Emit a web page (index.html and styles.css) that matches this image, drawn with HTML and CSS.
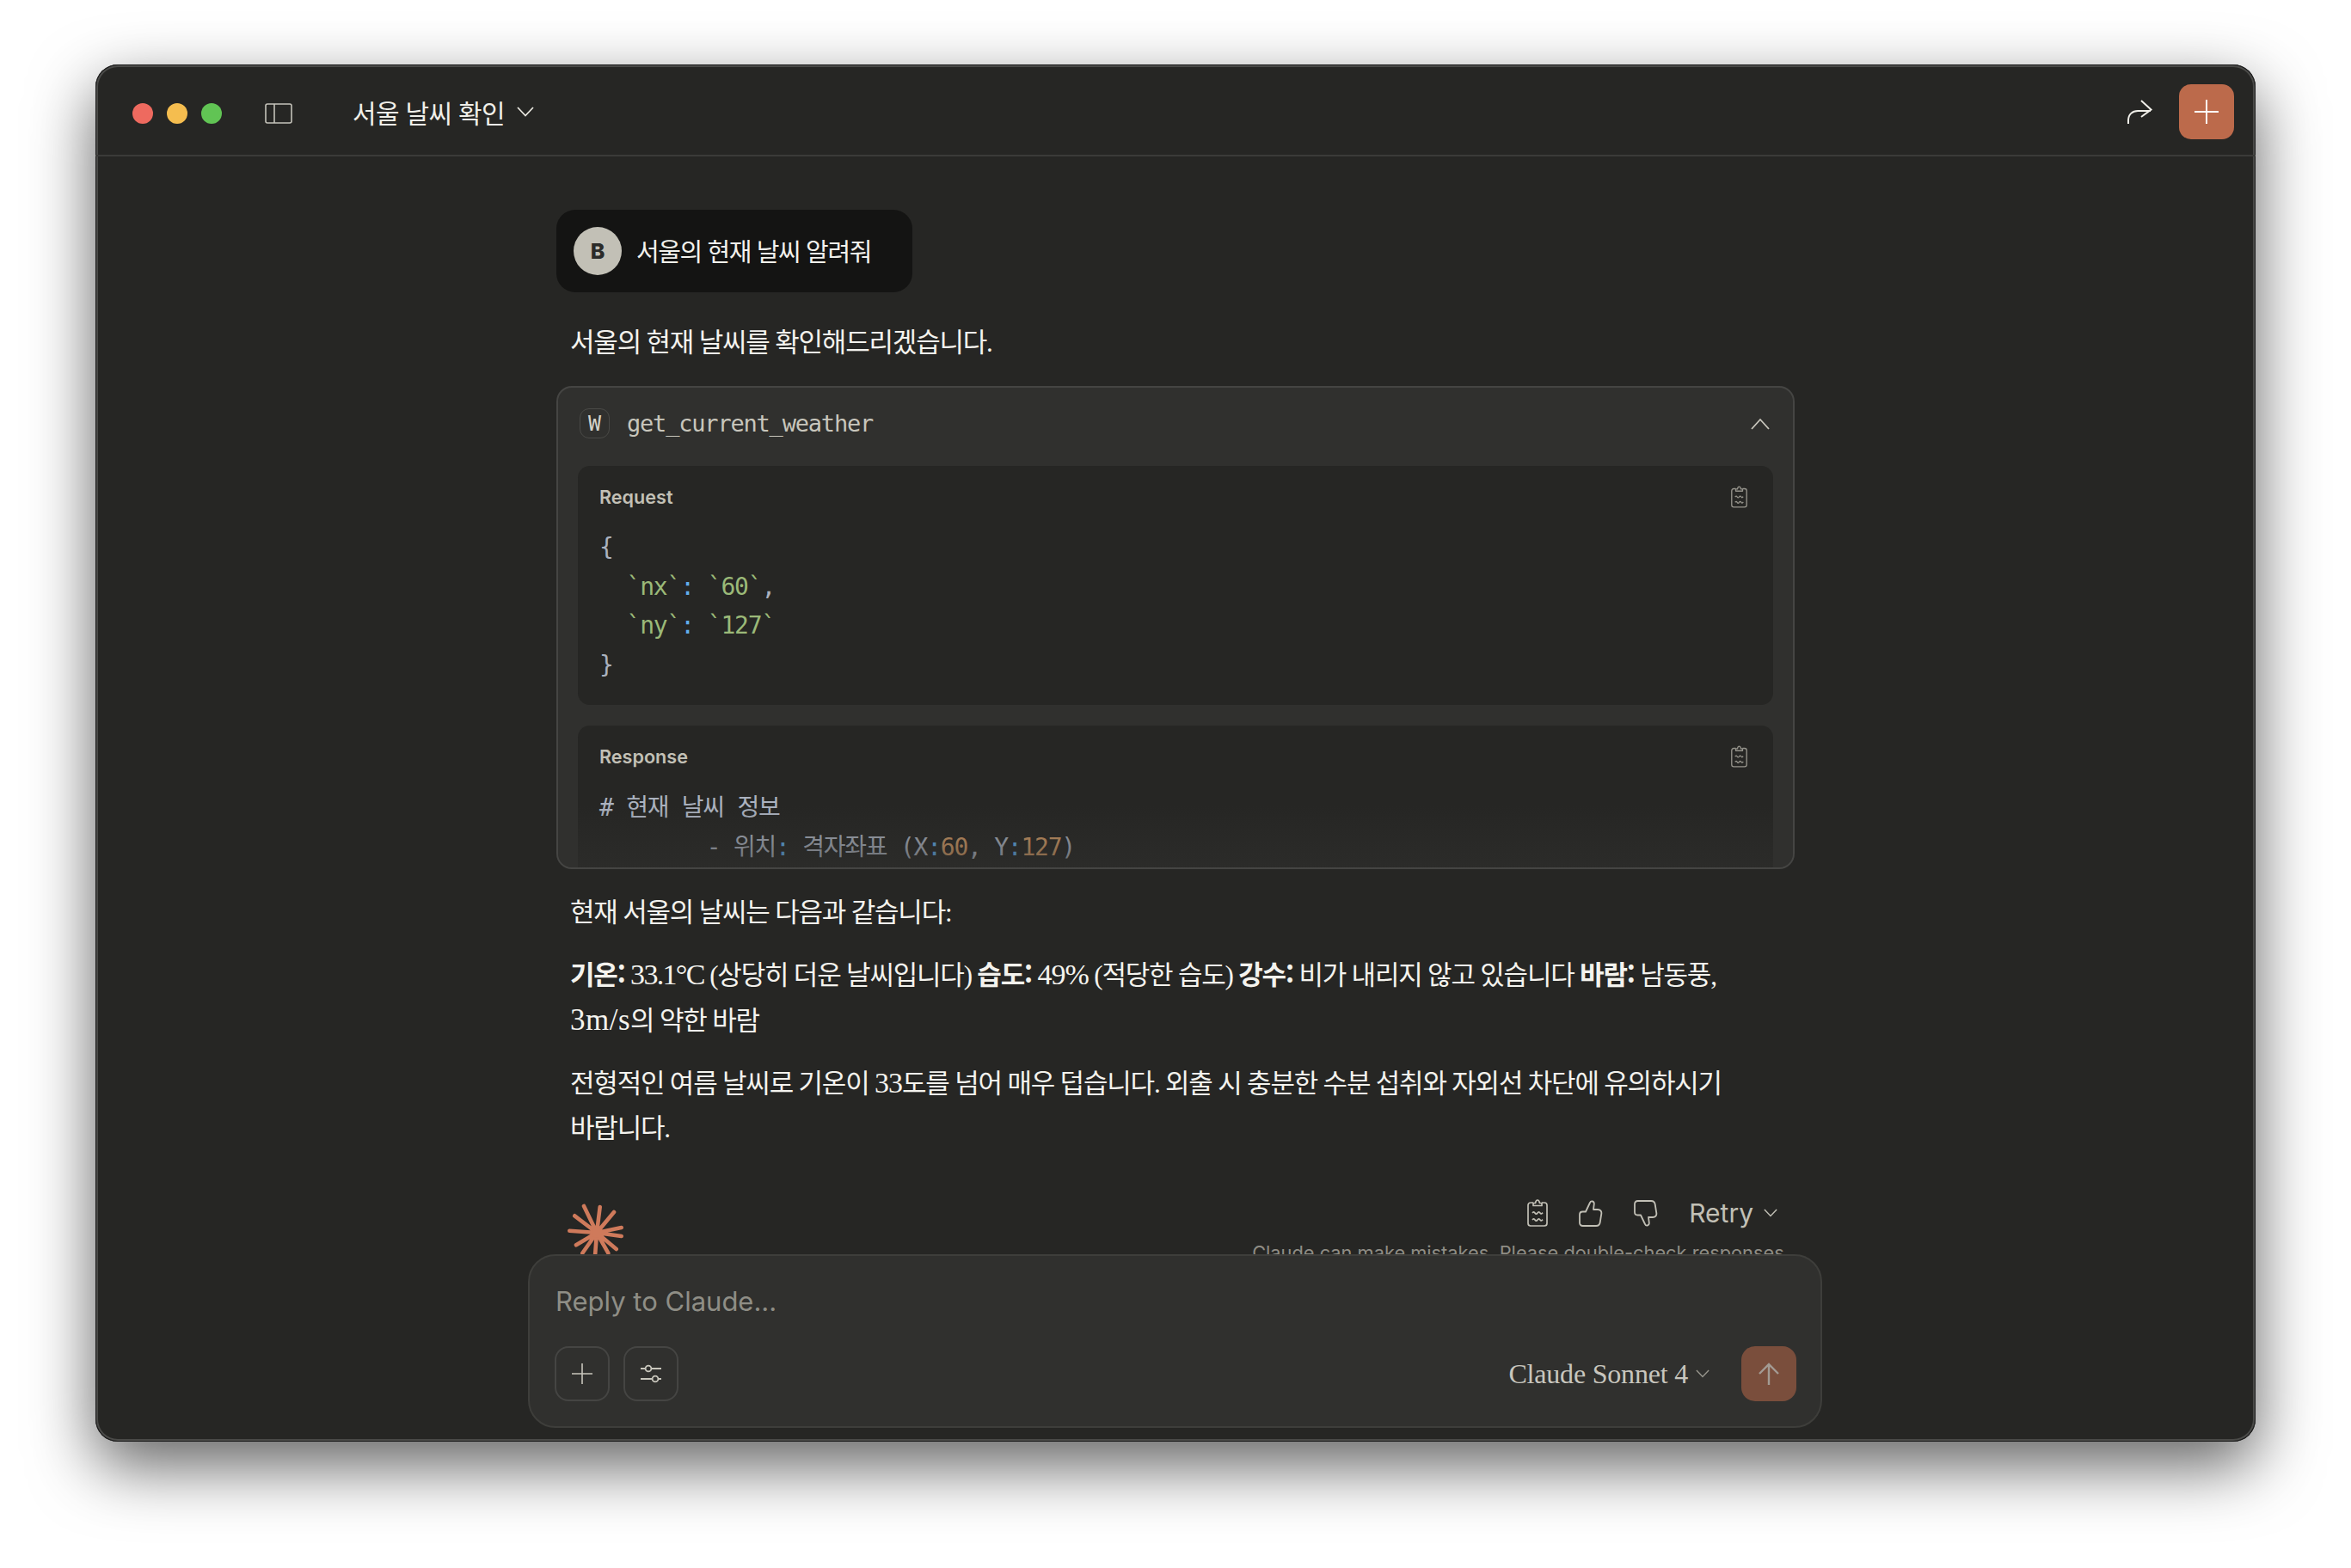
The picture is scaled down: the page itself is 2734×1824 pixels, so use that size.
FILE: index.html
```html
<!DOCTYPE html>
<html lang="ko">
<head>
    <meta charset="UTF-8">
    <title>서울 날씨 확인</title>
    <link rel="stylesheet" href="styles.css">
</head>
<body>
    <svg class="sprites" width="0" height="0">
        <symbol id="clip" viewBox="0 0 24 32">
            <path d="M7 4H4a3 3 0 0 0-3 3v21a3 3 0 0 0 3 3h16a3 3 0 0 0 3-3V7a3 3 0 0 0-3-3h-3" fill="none" stroke="currentColor" stroke-width="1.7"/>
            <path d="M7 7.5V4.5h2.5C10 2 11 1 12 1s2 1 2.500 3.500H17v3z" fill="none" stroke="currentColor" stroke-width="1.700" stroke-linejoin="round"/>
            <path d="M6 16c1.500-1.500 2-1.500 3 0s2 1.500 3 0 2-1.500 3 0 1.500 1 3-.3M6 24c1.500-1.500 2-1.500 3 0s2 1.500 3 0 2-1.500 3 0 1.500 1 3-.3" fill="none" stroke="currentColor" stroke-width="1.700"/>
        </symbol>
        <symbol id="thumb" viewBox="0 0 28 31">
            <path d="M8 13.500 13 3c1-2.500 5-2 4.800 1.500L17 11h5c3 0 4.800 2.200 4.300 5l-1.600 10c-.4 2.500-2 4-4.500 4H4.500C2.500 30 1 28.500 1 26.500v-9.500C1 15 2.500 13.500 4.500 13.500z" fill="none" stroke="currentColor" stroke-width="1.800" stroke-linejoin="round"/>
        </symbol>
    </svg>

    <div class="window">
        <!-- Title bar -->
        <div class="titlebar">
            <div class="lights">
                <span class="light red"></span>
                <span class="light yellow"></span>
                <span class="light green"></span>
            </div>
            <svg class="sidebar-icon" viewBox="0 0 32 24"><rect x="1" y="1" width="30" height="22" rx="2" fill="none" stroke="currentColor" stroke-width="1.600"/><path d="M11 1v22" stroke="currentColor" stroke-width="1.600"/></svg>
            <div class="chat-title">서울 날씨 확인</div>
            <svg class="title-chevron" viewBox="0 0 20 12"><path d="M1 1l9 9.500L19 1" fill="none" stroke="currentColor" stroke-width="1.800"/></svg>
            <svg class="share-icon" viewBox="0 0 30 30"><path d="M2 29v-4c0-7 5-11 11-11h15M17 2l11.500 10.500L17 21" fill="none" stroke="currentColor" stroke-width="2"/></svg>
            <button class="new-chat">
                <svg viewBox="0 0 28 28"><path d="M14 0v28M0 14h28" stroke="currentColor" stroke-width="2"/></svg>
            </button>
        </div>

        <div class="main">
            <div class="chat">
                <div class="user-msg">
                    <span class="avatar">B</span>
                    <span class="user-text">서울의 현재 날씨 알려줘</span>
                </div>
                <p class="answer first">서울의 현재 날씨를 확인해드리겠습니다.</p>

                <!-- Tool call -->
                <div class="tool">
                    <div class="tool-head">
                        <span class="tool-badge">W</span>
                        <span class="tool-name">get_current_weather</span>
                        <svg class="tool-chevron" viewBox="0 0 22 14"><path d="M1 13l10-11 10 11" fill="none" stroke="currentColor" stroke-width="1.800"/></svg>
                    </div>
                    <div class="panel">
                        <div class="panel-head">
                            <span>Request</span>
                            <svg class="panel-copy"><use href="#clip"/></svg>
                        </div>
<pre class="code"><span class="pun">{</span>
  <span class="str">`nx`</span><span class="key">:</span> <span class="str">`60`</span><span class="pun">,</span>
  <span class="str">`ny`</span><span class="key">:</span> <span class="str">`127`</span>
<span class="pun">}</span></pre>
                    </div>
                    <div class="panel second">
                        <div class="panel-head">
                            <span>Response</span>
                            <svg class="panel-copy"><use href="#clip"/></svg>
                        </div>
<pre class="code kr"><span class="pun"># 현재 날씨 정보
        - 위치</span><span class="key">:</span><span class="pun"> 격자좌표 (X</span><span class="key">:</span><span class="num">60</span><span class="pun">, Y</span><span class="key">:</span><span class="num">127</span><span class="pun">)</span></pre>
                    </div>
                    <div class="tool-fade"></div>
                </div>

                <p class="answer after-tool">현재 서울의 날씨는 다음과 같습니다:</p>
                <p class="answer tight"><b>기온:</b> <span class="lat temp">33.1°C</span> (상당히 더운 날씨입니다) <b>습도:</b> <span class="lat">49%</span> (적당한 습도) <b>강수:</b> 비가 내리지 않고 있습니다 <b>바람:</b> 남동풍,<br><span class="lat speed">3m/s</span>의 약한 바람</p>
                <p class="answer last">전형적인 여름 날씨로 기온이 <span class="lat">33</span>도를 넘어 매우 덥습니다. 외출 시 충분한 수분 섭취와 자외선 차단에 유의하시기<br>바랍니다.</p>

                <div class="actions">
                    <svg class="logo" viewBox="0 0 68 68">
                        <g stroke="#cf7a5b" stroke-width="4.600" stroke-linecap="round">
                            <path d="M34 35L19 4M34 35L37.700 5M34 35L54 11M34 35L62.700 29M34 35L62.700 39M34 35L56.700 54M34 35L47.300 58.700M34 35L31.700 66M34 35L17.300 58.700M34 35L10 49.300M34 35L2.300 32.700M34 35L8.300 15.300"/>
                        </g>
                        <circle cx="34" cy="35" r="6" fill="#cf7a5b"/>
                    </svg>
                    <div class="actions-right">
                        <div class="action-btns">
                            <svg class="act-copy"><use href="#clip"/></svg>
                            <svg class="act-thumb"><use href="#thumb"/></svg>
                            <svg class="act-thumb down"><use href="#thumb"/></svg>
                            <span class="retry">Retry</span>
                            <svg class="retry-chevron" viewBox="0 0 18 11"><path d="M1 1l8 8.500L17 1" fill="none" stroke="currentColor" stroke-width="1.600"/></svg>
                        </div>
                        <div class="disclaimer">Claude can make mistakes. Please double-check responses.</div>
                    </div>
                </div>
            </div>

            <!-- Reply box sits over the end of the chat -->
            <div class="composer">
                <div class="placeholder">Reply to Claude...</div>
                <div class="composer-row">
                    <button class="tool-btn">
                        <svg viewBox="0 0 24 24" width="24" height="24"><path d="M12 0v24M0 12h24" stroke="currentColor" stroke-width="1.600"/></svg>
                    </button>
                    <button class="tool-btn">
                        <svg viewBox="0 0 24 22" width="24" height="22"><path d="M0 5h5M13 5h11M0 17h13M20 17h4" stroke="currentColor" stroke-width="1.800"/><circle cx="9" cy="5" r="3.400" fill="none" stroke="currentColor" stroke-width="1.800"/><circle cx="17" cy="17" r="3.400" fill="none" stroke="currentColor" stroke-width="1.800"/></svg>
                    </button>
                    <span class="model">Claude Sonnet 4</span>
                    <svg class="model-chevron" viewBox="0 0 18 11"><path d="M1 1l8 8.500L17 1" fill="none" stroke="currentColor" stroke-width="1.600"/></svg>
                    <button class="send">
                        <svg viewBox="0 0 24 26" width="24" height="26"><path d="M12 26V2M1 13L12 2l11 11" fill="none" stroke="currentColor" stroke-width="2.400"/></svg>
                    </button>
                </div>
            </div>
        </div>
    </div>
</body>
</html>
```

FILE: styles.css
```css
html, body {
    margin: 0;
    padding: 0;
    background-color: #fff;
}
body {
    width: 2734px;
    height: 1824px;
    overflow: hidden;
    font-family: "Noto Sans CJK KR", sans-serif;
}
.sprites {
    position: absolute;
}
.window {
    width: 2512px;
    height: 1602px;
    margin: 75px 0 0 111px;
    box-sizing: border-box;
    display: flex;
    flex-direction: column;
    background-color: #262624;
    border-radius: 26px;
    box-shadow: inset 0 0 0 1px #1a1a1a, inset 0 0 0 3px #4a4a48, 0 28px 76px rgba(0, 0, 0, 0.62);
    overflow: hidden;
    color: #f2f1ec;
}

/* title bar */
.titlebar {
    height: 107px;
    flex: none;
    box-sizing: border-box;
    display: flex;
    align-items: center;
    padding: 6px 25px 1px 43px;
    border-bottom: 2px solid #3b3b39;
}
.lights {
    display: flex;
    gap: 16px;
    margin-top: 4px;
}
.light {
    width: 24px;
    height: 24px;
    border-radius: 50%;
}
.light.red { background-color: #ee6a5f; }
.light.yellow { background-color: #f5bd4f; }
.light.green { background-color: #61c454; }
.sidebar-icon {
    width: 32px;
    height: 24px;
    margin-left: 50px;
    margin-top: 4px;
    color: #c5c3ba;
}
.chat-title {
    margin-left: 70px;
    font-size: 30px;
    letter-spacing: -0.7px;
    line-height: 40px;
    color: #f0efe9;
}
.title-chevron {
    width: 20px;
    height: 12px;
    margin-left: 14px;
    color: #e6e4dd;
}
.share-icon {
    width: 30px;
    height: 30px;
    margin-left: auto;
    color: #f0efe9;
}
.new-chat {
    width: 64px;
    height: 64px;
    margin-left: 31px;
    padding: 0;
    border: none;
    border-radius: 14px;
    background-color: #bc6a4b;
    color: #fff;
    display: flex;
    align-items: center;
    justify-content: center;
}
.new-chat svg {
    width: 28px;
    height: 28px;
}

/* chat column */
.main {
    flex: 1;
    position: relative;
    overflow: hidden;
}
.chat {
    width: 1440px;
    margin: 0 auto;
    padding-top: 62px;
}
.user-msg {
    width: 414px;
    height: 96px;
    box-sizing: border-box;
    display: flex;
    align-items: center;
    gap: 17px;
    padding-left: 20px;
    background-color: #141413;
    border-radius: 22px;
    font-size: 29px;
    letter-spacing: -1.4px;
}
.user-text {
    margin-top: -3px;
}
.avatar {
    width: 56px;
    height: 56px;
    flex: none;
    border-radius: 50%;
    background-color: #c2c0b6;
    color: #2b2b29;
    display: flex;
    align-items: center;
    justify-content: center;
    font-family: Inter, sans-serif;
    font-size: 25px;
    font-weight: 800;
    letter-spacing: 0;
}
.answer {
    margin: 22px 0 0 16px;
    font-family: "Liberation Serif", "Noto Sans CJK KR", serif;
    font-size: 31px;
    line-height: 52px;
    letter-spacing: -1.2px;
    white-space: nowrap;
    color: #f4f3ee;
}
.answer.first {
    margin-top: 33px;
}
.answer.after-tool {
    margin-top: 25px;
}
.answer.tight {
    margin-top: 18px;
}
.answer.last {
    margin-top: 20px;
}
.answer b {
    font-family: "Noto Sans CJK KR", sans-serif;
    font-weight: 700;
}
.lat {
    font-size: 34px;
    letter-spacing: -1px;
}
.lat.temp {
    letter-spacing: -1.700px;
}
.lat.speed {
    font-size: 35px;
    letter-spacing: 0.5px;
}

/* tool card */
.tool {
    position: relative;
    height: 562px;
    margin-top: 24px;
    box-sizing: border-box;
    padding: 0 23px;
    background-color: #30302e;
    border: 2px solid #454543;
    border-radius: 18px;
    overflow: hidden;
}
.tool-head {
    height: 91px;
    box-sizing: border-box;
    padding: 0 2px 8px;
    display: flex;
    align-items: center;
}
.tool-badge {
    width: 35px;
    height: 35px;
    box-sizing: border-box;
    border: 1px solid #4a4a47;
    border-radius: 11px;
    display: flex;
    align-items: center;
    justify-content: center;
    font-family: "DejaVu Sans Mono", monospace;
    font-size: 25px;
    letter-spacing: 0;
    color: #d5d3ca;
}
.tool-name {
    margin-left: 20px;
    font-family: "DejaVu Sans Mono", monospace;
    font-size: 27px;
    letter-spacing: -1.200px;
    color: #c8c6bc;
}
.tool-chevron {
    width: 22px;
    height: 14px;
    margin-left: auto;
    margin-right: 2px;
    color: #c8c6bc;
}
.panel {
    height: 278px;
    box-sizing: border-box;
    padding: 0 30px 0 25px;
    background-color: #262624;
    border-radius: 14px;
}
.panel.second {
    margin-top: 24px;
}
.panel-head {
    height: 72px;
    display: flex;
    align-items: center;
    justify-content: space-between;
    font-family: Inter, sans-serif;
    font-size: 21.600px;
    font-weight: 600;
    color: #c2c0b6;
}
.panel-copy {
    width: 19px;
    height: 26px;
    color: #96948c;
}
.code {
    margin: 0;
    font-family: "DejaVu Sans Mono", "Noto Sans CJK KR", monospace;
    font-size: 28px;
    line-height: 45.500px;
    letter-spacing: -1.150px;
    color: #abb2bf;
}
.code.kr {
    padding-top: 1px;
    letter-spacing: -1.250px;
}
.pun { color: #abb2bf; }
.str { color: #9bb978; }
.key { color: #61afef; }
.num { color: #d19a66; }
.tool-fade {
    position: absolute;
    left: 0;
    right: 0;
    bottom: 0;
    height: 72px;
    background: linear-gradient(to bottom, rgba(48, 48, 46, 0), rgba(48, 48, 46, 0.55));
}

/* actions under the answer */
.actions {
    margin-top: 60px;
    margin-left: 13px;
    display: flex;
    justify-content: space-between;
    align-items: flex-start;
}
.logo {
    width: 68px;
    height: 68px;
    flex: none;
}
.actions-right {
    margin-right: 6px;
    margin-top: -4px;
    display: flex;
    flex-direction: column;
    align-items: flex-end;
}
.action-btns {
    height: 32px;
    display: flex;
    align-items: center;
    margin-right: 14px;
    color: #c2c0b6;
}
.act-copy {
    width: 24px;
    height: 32px;
}
.act-thumb {
    width: 28px;
    height: 31px;
    margin-left: 36px;
}
.act-thumb.down {
    transform: scaleY(-1);
    margin-left: 36px;
}
.retry {
    margin-left: 36px;
    font-family: Inter, sans-serif;
    font-size: 30px;
    line-height: 32px;
}
.retry-chevron {
    width: 16px;
    height: 10px;
    margin-left: 12px;
}
.disclaimer {
    margin-top: 15px;
    font-family: Inter, sans-serif;
    font-size: 21.800px;
    line-height: 30px;
    white-space: nowrap;
    color: #8f8d85;
}

/* reply box */
.composer {
    position: absolute;
    left: 503px;
    top: 1277px;
    width: 1505px;
    height: 202px;
    box-sizing: border-box;
    padding: 0 28px 0 29px;
    background-color: #30302e;
    border: 2px solid #3e3e3b;
    border-radius: 32px;
}
.placeholder {
    height: 105px;
    padding: 0 0 0 1px;
    line-height: 106px;
    font-family: Inter, sans-serif;
    font-size: 31px;
    color: #8f8e86;
}
.composer-row {
    display: flex;
    align-items: center;
    gap: 16px;
}
.tool-btn {
    width: 64px;
    height: 64px;
    padding: 0;
    background: none;
    border: 2px solid #454543;
    border-radius: 16px;
    color: #c8c6bc;
    display: flex;
    align-items: center;
    justify-content: center;
}
.model {
    margin-left: auto;
    font-family: "Liberation Serif", serif;
    font-size: 32px;
    letter-spacing: -0.2px;
    color: #c8c6be;
}
.model-chevron {
    width: 16px;
    height: 10px;
    margin-left: -7px;
    margin-right: 21px;
    color: #96948c;
}
.send {
    width: 64px;
    height: 64px;
    padding: 0;
    border: none;
    border-radius: 16px;
    background-color: #7a4e3c;
    color: #a39b93;
    display: flex;
    align-items: center;
    justify-content: center;
}
```
